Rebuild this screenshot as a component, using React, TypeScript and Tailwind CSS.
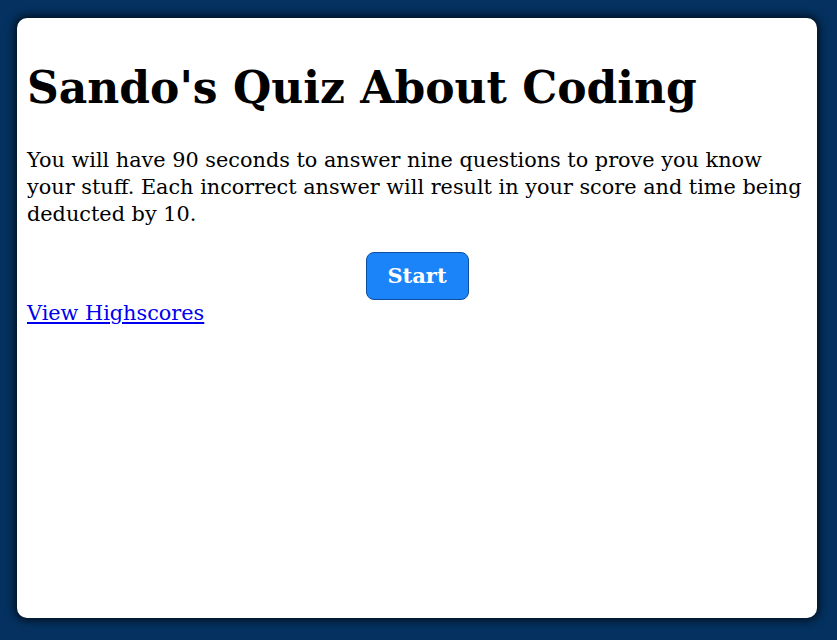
import React from 'react';

const App: React.FC = () => {
  return (
    <div className="min-h-screen w-full bg-[#04315f] pt-[18px] pb-[22px] font-['DejaVu_Serif',serif]">
      <div className="ml-[17px] w-[800px] h-[600px] bg-white rounded-[10px] shadow-[0_0_8px_2px_rgba(0,0,0,0.75)] p-[10px] text-black">
        <h1 className="mt-[32px] mb-[32px] text-[44px] leading-[55px] font-bold">Sando's Quiz About Coding</h1>
        <p className="text-[20.8px] leading-[27px] mb-[24px]">
          You will have 90 seconds to answer nine questions to prove you know your stuff. Each incorrect answer will result in your score and time being deducted by 10.
        </p>
        <div className="flex justify-center">
          <button className="w-[103px] h-[48px] bg-[#1a84f8] border border-[#0d4fa0] rounded-[8px] text-white text-[21px] font-bold">
            Start
          </button>
        </div>
        <a href="#" className="block w-fit text-[20.8px] leading-[27px] text-[#0000ee] underline">View Highscores</a>
      </div>
    </div>
  );
};

export default App;
